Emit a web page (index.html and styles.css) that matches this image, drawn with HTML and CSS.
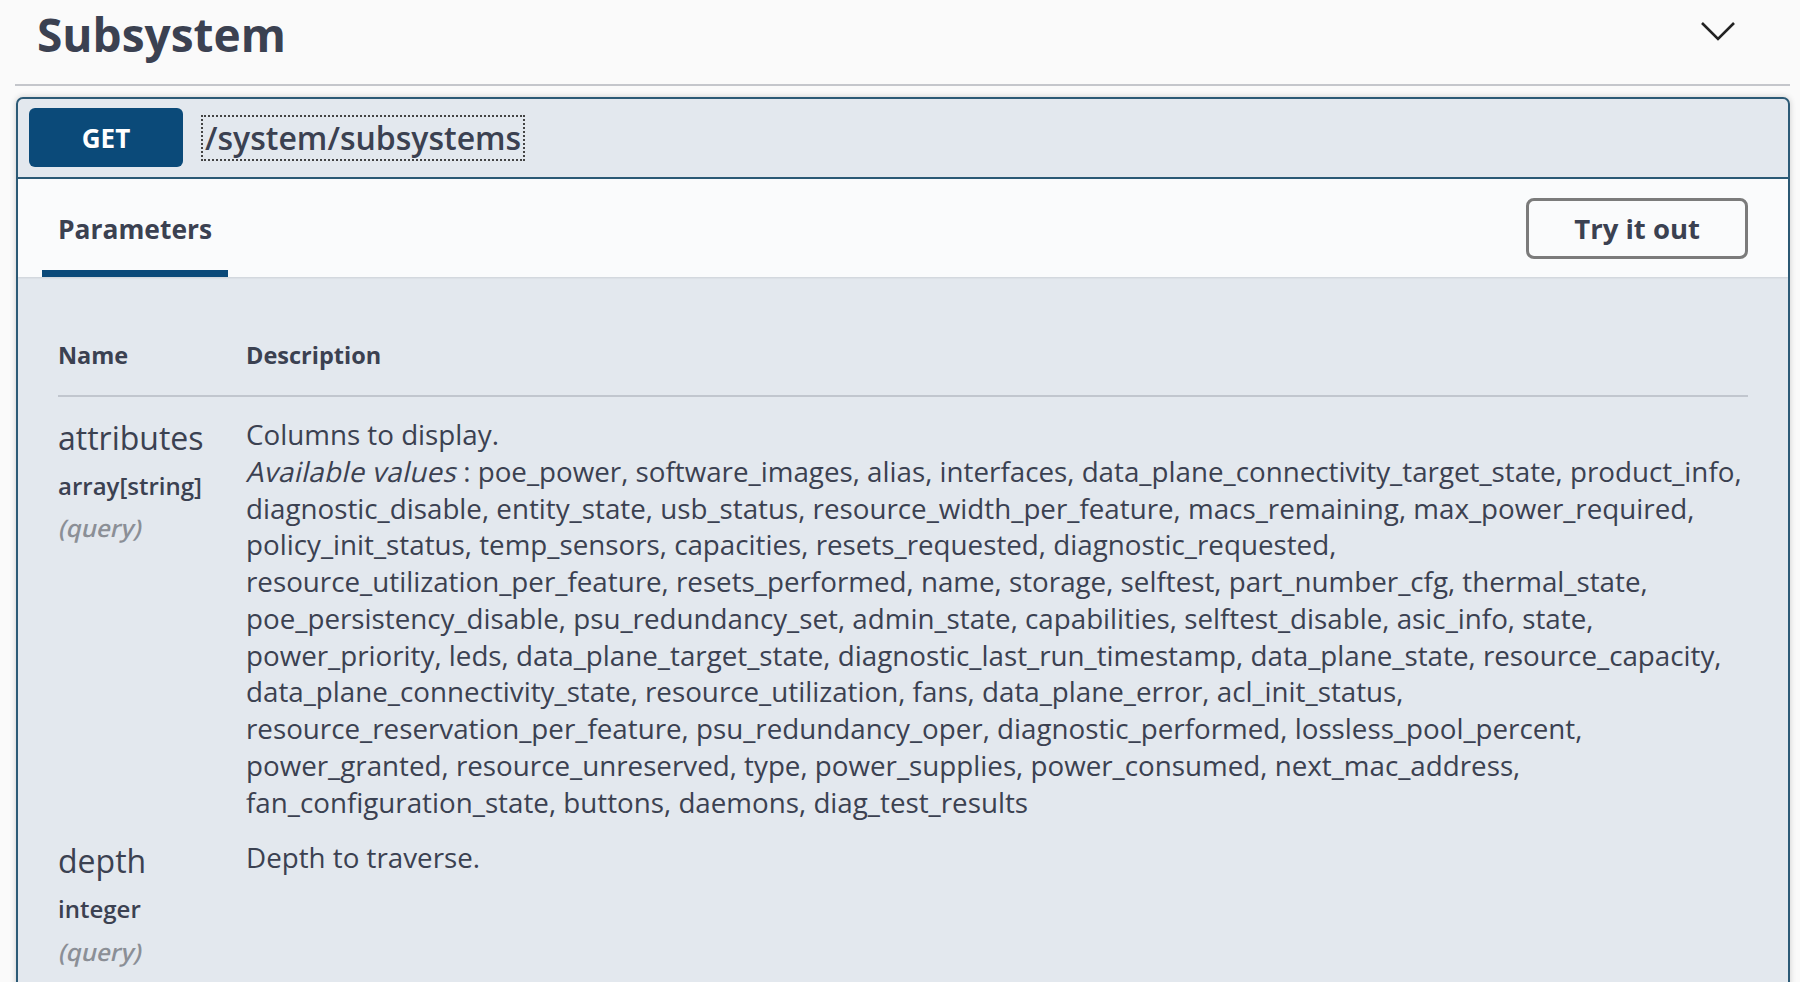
FILE: index.html
```html
<!DOCTYPE html>
<html lang="en">
<head>
<meta charset="utf-8">
<title>Subsystem</title>
<link rel="stylesheet" href="styles.css">
</head>
<body>
<div class="page">
  <div class="tag">
    <h3 class="tag-title">Subsystem</h3>
    <svg class="chevron" width="36" height="20" viewBox="0 0 36 20"><path d="M2 2 L18 18 L34 2" fill="none" stroke="#222" stroke-width="2.6"/></svg>
  </div>
  <div class="opblock">
    <div class="summary">
      <span class="method">GET</span>
      <span class="path">/system/subsystems</span>
    </div>
    <div class="section-header">
      <div class="tab">Parameters</div>
      <button class="try">Try it out</button>
    </div>
    <div class="params">
      <div class="params-head">
        <div class="col-name">Name</div>
        <div class="col-desc">Description</div>
      </div>
      <div class="rows">
        <div class="param-row">
          <div class="col-name">
            <div class="p-name">attributes</div>
            <div class="p-type">array[string]</div>
            <div class="p-in"><span class="oblique">(query)</span></div>
          </div>
          <div class="col-desc desc">
            <p>Columns to display.</p>
            <p><span class="oblique wide">Available values</span> : poe_power, software_images, alias, interfaces, data_plane_connectivity_target_state, product_info, diagnostic_disable, entity_state, usb_status, resource_width_per_feature, macs_remaining, max_power_required, policy_init_status, temp_sensors, capacities, resets_requested, diagnostic_requested, resource_utilization_per_feature, resets_performed, name, storage, selftest, part_number_cfg, thermal_state, poe_persistency_disable, psu_redundancy_set, admin_state, capabilities, selftest_disable, asic_info, state, power_priority, leds, data_plane_target_state, diagnostic_last_run_timestamp, data_plane_state, resource_capacity, data_plane_connectivity_state, resource_utilization, fans, data_plane_error, acl_init_status, resource_reservation_per_feature, psu_redundancy_oper, diagnostic_performed, lossless_pool_percent, power_granted, resource_unreserved, type, power_supplies, power_consumed, next_mac_address, fan_configuration_state, buttons, daemons, diag_test_results</p>
          </div>
        </div>
        <div class="param-row">
          <div class="col-name">
            <div class="p-name">depth</div>
            <div class="p-type">integer</div>
            <div class="p-in"><span class="oblique">(query)</span></div>
          </div>
          <div class="col-desc desc">
            <p>Depth to traverse.</p>
          </div>
        </div>
      </div>
    </div>
  </div>
</div>
</body>
</html>
```

FILE: styles.css
```css
html, body {
  margin: 0;
  overflow: hidden;
  background: #fafafa;
}
body {
  font-family: "Open Sans", "Noto Sans", sans-serif;
  color: #3b4151;
}
.page {
  padding: 0 10px 0 15px;
}
.tag {
  display: flex;
  align-items: center;
  justify-content: space-between;
  padding: 2px 0 18px;
  border-bottom: 2px solid rgba(59, 65, 81, 0.28);
}
.tag-title {
  margin: 0;
  padding-left: 22px;
  font-size: 46px;
  font-weight: 700;
  line-height: 64px;
}
.chevron {
  margin-right: 54px;
  margin-bottom: 6px;
}
.opblock {
  margin: 11px 0 0 1px;
  border: 2px solid #2c5a76;
  border-radius: 7px;
  background: #e3e8ee;
  box-shadow: 0 0 6px rgba(0, 0, 0, 0.19);
}
.summary {
  display: flex;
  align-items: center;
  padding: 9px 11px 10px;
  border-bottom: 2px solid #2c5a76;
}
.method {
  width: 154px;
  height: 59px;
  display: flex;
  align-items: center;
  justify-content: center;
  background: #0b4a79;
  color: #fff;
  font-size: 26px;
  font-weight: 700;
  border-radius: 6px;
  text-shadow: 0 1px 0 rgba(0, 0, 0, 0.1);
}
.path {
  margin-left: 20px;
  padding: 0 2px;
  font-size: 32px;
  font-weight: 600;
  line-height: 42px;
  outline: 2px dotted #444;
}
.section-header {
  display: flex;
  align-items: stretch;
  justify-content: space-between;
  height: 98px;
  box-sizing: border-box;
  padding: 0 40px 0 24px;
  background: rgba(255, 255, 255, 0.8);
  box-shadow: 0 1px 2px rgba(0, 0, 0, 0.1);
}
.tab {
  display: flex;
  align-items: center;
  box-sizing: border-box;
  padding: 8px 16px 0;
  font-size: 26.4px;
  font-weight: 700;
  border-bottom: 7px solid #0b4a79;
}
.try {
  align-self: center;
  height: 61px;
  padding: 0 45px;
  border: 3px solid #7b7b7b;
  border-radius: 8px;
  background: transparent;
  font-family: inherit;
  font-size: 27.5px;
  font-weight: 700;
  color: #3b4151;
}
.params {
  padding: 0 40px 40px;
}
.params-head {
  display: flex;
  padding: 62px 0 24px;
  border-bottom: 2px solid rgba(59, 65, 81, 0.2);
  font-size: 23.5px;
  font-weight: 700;
  line-height: 32px;
}
.col-name {
  width: 188px;
  flex: none;
}
.col-desc {
  flex: 1;
  min-width: 0;
}
.rows {
  padding-top: 10px;
}
.param-row {
  display: flex;
  padding: 9px 0 9px;
}
.param-row + .param-row {
  padding-top: 10px;
}
.p-name {
  font-size: 32px;
  line-height: 43.6px;
}
.p-type {
  font-size: 24px;
  font-weight: 600;
  line-height: 32.7px;
  padding: 10px 0;
}
.p-in {
  font-size: 24px;
  font-weight: 600;
  line-height: 32.7px;
  color: #8b8f96;
}
.oblique {
  display: inline-block;
  transform: skewX(-13deg);
  transform-origin: 0 76%;
}
.wide {
  letter-spacing: 0.3px;
}
.desc {
  font-size: 27.75px;
  line-height: 36.75px;
}
.desc p {
  margin: 0;
}
```
